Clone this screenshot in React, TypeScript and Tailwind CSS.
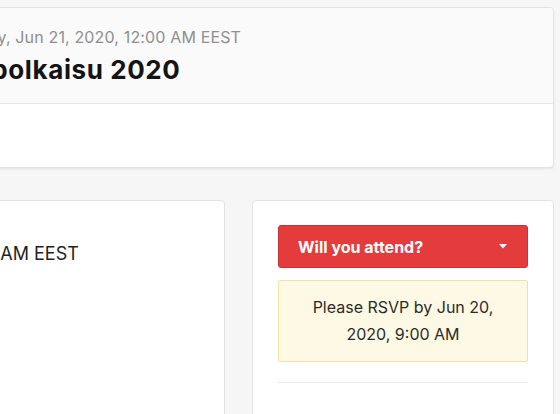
const font = { fontFamily: 'Inter, "Open Sans", "Liberation Sans", sans-serif' }

export default function App() {
  return (
    <main
      className="h-[414px] w-[560px] overflow-hidden bg-[#f6f6f6] pt-[7px]"
      style={font}
    >
      <div className="-ml-[76px] w-[630px]">
        <section className="overflow-hidden rounded-[4px] border border-[#e2e2e2] bg-white shadow-[0_1px_2px_rgba(0,0,0,0.08)]">
          <div className="h-[96px] border-b border-[#e6e6e6] bg-[#fafafa] px-[24px] pt-[17px]">
            <p className="whitespace-nowrap text-[16px] leading-[24px] tracking-[0.15px] text-[#8f8f8f]">
              Sunday, Jun 21, 2020, 12:00 AM EEST
            </p>
            <h1 className="mt-[5px] whitespace-nowrap text-[26px] font-bold leading-[32px] tracking-[0.6px] text-[#141414]">
              Etäpolkaisu 2020
            </h1>
          </div>
          <div className="h-[63px]" />
        </section>

        <div className="mt-[32px] flex gap-[27px]">
          <section className="h-[230px] flex-1 rounded-[4px] border border-[#e2e2e2] bg-white px-[24px] pt-[40px]">
            <p className="whitespace-nowrap text-[18px] leading-[26px] text-[#1f1f1f]">
              12:00 AM EEST
            </p>
          </section>

          <section className="h-[230px] w-[302px] rounded-[4px] border border-[#e2e2e2] bg-white px-[25px] pt-[24px]">
            <button className="flex h-[43px] w-full items-center justify-between rounded-[3px] border border-[#c93232] bg-[#e43c3c] pl-[19px] pr-[20px] text-[16px] font-bold text-white">
              <span>Will you attend?</span>
              <svg width="8" height="5" viewBox="0 0 8 5" aria-hidden="true">
                <path d="M0 0h8L4 4.5z" fill="#fff" />
              </svg>
            </button>

            <div className="mt-[12px] flex h-[82px] items-center justify-center rounded-[2px] border border-[#f0e1a4] bg-[#fef9e4] px-[12px] text-center text-[16px] leading-[27px] text-[#2b2b2b]">
              Please RSVP by Jun 20, 2020, 9:00 AM
            </div>

            <div className="mt-[20px] border-t border-[#ececec]" />
          </section>
        </div>
      </div>
    </main>
  )
}
